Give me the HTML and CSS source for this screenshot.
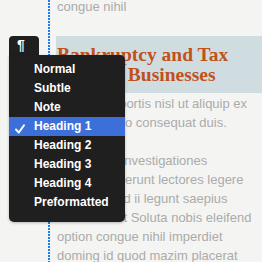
FILE: index.html
```html
<!DOCTYPE html>
<html>
<head>
  <title>Editor - paragraph styles</title>
  <link rel="stylesheet" href="styles.css">
</head>
<body>
  <div class="editor">
    <div class="doc">
      <p class="tail">congue nihil</p>
      <h2 class="section-title">Bankruptcy and Tax<br>Tips for Businesses</h2>
      <p>tincidunt lobortis nisl ut aliquip ex<br>ea commodo consequat duis.</p>
      <p>claritatem. Investigationes<br>demonstraverunt lectores legere<br>me lius quod ii legunt saepius<br>Nam liber et Soluta nobis eleifend<br>option congue nihil imperdiet<br>doming id quod mazim placerat</p>
    </div>

    <div class="style-menu">
      <div class="menu-tab">&para;</div>
      <ul class="menu-list">
        <li>Normal</li>
        <li>Subtle</li>
        <li>Note</li>
        <li class="selected">
          <svg class="check" width="10" height="10" viewBox="0 0 10 10">
            <path d="M1 5.5 L3.8 8.6 L9 1.2" fill="none" stroke="#fff" stroke-width="1.9" stroke-linecap="round" stroke-linejoin="round"/>
          </svg>
          Heading 1
        </li>
        <li>Heading 2</li>
        <li>Heading 3</li>
        <li>Heading 4</li>
        <li>Preformatted</li>
      </ul>
    </div>
  </div>
</body>
</html>
```

FILE: styles.css
```css
  body {
    margin: 0;
    padding: 0;
    background-color: #f4f4f2; /* paper */
    overflow: hidden;
  }

  .editor {
    position: relative;
    height: 262px;
  }

  .doc {
    display: flow-root; /* keep the first line's negative margin inside */
    margin-left: 48px;
    padding-left: 9px;
    height: 262px;
    font-family: "Liberation Sans", Arial, sans-serif;
    font-size: 13px;
    line-height: 19px;
    color: #ababab;
    white-space: nowrap;
    /* blue dotted margin guide */
    background-image: linear-gradient(to bottom, #1f7df0 0, #1f7df0 2px, transparent 2px);
    background-size: 2px 3px;
    background-repeat: repeat-y;
    background-position: 0 0;
  }

  .doc p {
    margin: 0 0 19px;
  }

  .doc p.tail {
    margin: -3px 0 20px;
  }

  .section-title {
    margin: 0 0 1px -1px;
    padding: 9px 0 8px 1px;
    background-color: #cfdde1;
    font-family: "Liberation Serif", "Times New Roman", serif;
    font-size: 19.5px;
    line-height: 20px;
    font-weight: bold;
    color: #c1511b;
  }

  /* paragraph style popup */
  .style-menu {
    position: absolute;
    left: 9px;
    top: 36px;
    font-family: "Liberation Sans", Arial, sans-serif;
    font-weight: bold;
    color: #fff;
  }

  .menu-tab {
    width: 30px;
    height: 19px;
    background-color: #1f1f1f;
    border-radius: 4px 4px 0 0;
    font-size: 14px;
    line-height: 19px;
    padding-left: 8px;
    box-sizing: border-box;
  }

  .menu-list {
    list-style: none;
    margin: 0;
    width: 116px;
    padding: 5px 0 10px;
    background-color: #1f1f1f;
    border-radius: 0 5px 5px 5px;
    box-shadow: 0 1px 3px rgba(0, 0, 0, 0.25);
  }

  .menu-list li {
    position: relative;
    height: 19px;
    line-height: 19px;
    padding-left: 25px;
    font-size: 12px;
  }

  .menu-list li.selected {
    background-color: #3c6fd8;
  }

  .check {
    position: absolute;
    left: 6px;
    top: 7px;
  }
```
